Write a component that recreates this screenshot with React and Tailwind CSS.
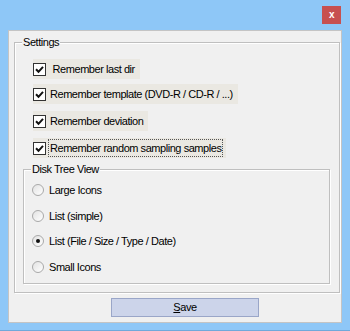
import React from "react";

const font = { fontFamily: '"Liberation Sans", Arial, sans-serif' };

const CheckBox = () => (
  <span className="w-[13px] h-[13px] border border-[#333] bg-white flex items-center justify-center shrink-0">
    <svg width="9" height="9" viewBox="0 0 9 9">
      <path d="M1 4.3 L3.5 6.8 L8 1.8" stroke="#111" strokeWidth="2" fill="none" />
    </svg>
  </span>
);

const Radio = ({ on }) => (
  <span className="w-[12px] h-[12px] rounded-full border border-[#a9a9a9] bg-gradient-to-br from-[#e2e2e2] to-white flex items-center justify-center shrink-0">
    {on && <span className="w-[4px] h-[4px] rounded-full bg-[#111]" />}
  </span>
);

const checks = [
  { label: "\u00a0Remember last dir", mt: "mt-[16px]" },
  { label: "Remember template (DVD-R / CD-R / ...)", mt: "mt-[5px]" },
  { label: "Remember deviation", mt: "mt-[7px]" },
  { label: "Remember random sampling samples", mt: "mt-[7px]", focus: true },
];

const radios = [
  { label: "Large Icons", mt: "mt-[10px]" },
  { label: "List (simple)", mt: "mt-[6px]" },
  { label: "List (File / Size / Type / Date)", mt: "mt-[5px]", on: true },
  { label: "Small Icons", mt: "mt-[6px]" },
];

export default function App() {
  return (
    <div className="w-[350px] h-[331px] bg-[#8ec7f7] flex flex-col border-b border-[#6fa9da] text-[11px] tracking-[-0.45px] text-black" style={font}>
      <div className="h-[30px] flex justify-end items-start pt-[6px] pr-[9px]">
        <button className="w-[19px] h-[18px] bg-[#c75050] text-white text-[10px] font-bold leading-none flex items-center justify-center">
          x
        </button>
      </div>

      <div className="mx-[8px] h-[293px] bg-[#f0f0f0] border border-[#c4c4c4] flex flex-col">
        <div className="mt-[11px] ml-[5px] w-[326px] h-[251px] border border-[#bfbfbf] shadow-[1px_1px_0_#fff,inset_1px_1px_0_#fff] relative flex flex-col pl-[18px]">
          <span className="absolute -top-[8px] left-[7px] px-[1px] bg-[#f0f0f0] leading-[14px]">Settings</span>

          {checks.map((c) => (
            <div key={c.label} className={`${c.mt} h-[20px] flex items-center self-start bg-[#eae8e2] pr-[3px]`}>
              <CheckBox />
              <span className={`ml-[2px] leading-[16px] px-[1px] ${c.focus ? "border border-dotted border-[#555]" : "border border-transparent"}`}>
                {c.label}
              </span>
            </div>
          ))}

          <div className="mt-[11px] -ml-[10px] w-[307px] h-[115px] border border-[#bfbfbf] shadow-[1px_1px_0_#fff,inset_1px_1px_0_#fff] relative flex flex-col pl-[8px]">
            <span className="absolute -top-[8px] left-[7px] px-[1px] bg-[#f0f0f0] leading-[14px]">Disk Tree View</span>
            {radios.map((r) => (
              <div key={r.label} className={`${r.mt} h-[20px] flex items-center`}>
                <Radio on={r.on} />
                <span className="ml-[5px]">{r.label}</span>
              </div>
            ))}
          </div>
        </div>

        <button className="mt-[5px] ml-[102px] w-[148px] h-[19px] bg-[#ccd4ea] border border-[#9aa6c8] flex items-center justify-center text-[11px]">
          <span><span className="underline">S</span>ave</span>
        </button>
      </div>
    </div>
  );
}
